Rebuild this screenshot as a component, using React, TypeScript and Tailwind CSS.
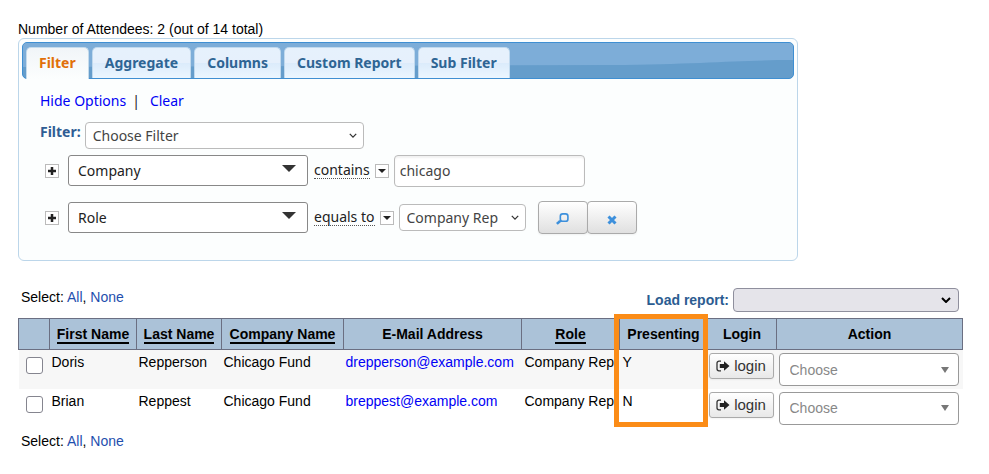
const tabs = ["Filter", "Aggregate", "Columns", "Custom Report", "Sub Filter"];

const attendees = [
  {
    first: "Doris",
    last: "Repperson",
    company: "Chicago Fund",
    email: "drepperson@example.com",
    role: "Company Rep",
    presenting: "Y",
  },
  {
    first: "Brian",
    last: "Reppest",
    company: "Chicago Fund",
    email: "breppest@example.com",
    role: "Company Rep",
    presenting: "N",
  },
];

export default function App() {
  return (
    <main className="min-h-screen bg-white pt-5 pr-[26px] pb-5 pl-[18px] font-['Liberation_Sans',Arial,sans-serif] text-sm text-black">
      <p className="leading-[18px]">Number of Attendees: 2 (out of 14 total)</p>

      <FilterPanel />

      <div className="mt-[27px] flex items-start justify-between pr-1 pl-[3px]">
        <SelectLinks />
        <div className="flex items-center gap-1">
          <label htmlFor="load-report" className="font-bold text-[#2b5c91]">
            Load report:
          </label>
          <div className="relative">
            <select
              id="load-report"
              className="block h-6 w-[226px] appearance-none rounded border border-[#8f8f9d] bg-[#e5e4ea]"
            />
            <Chevron className="right-2 h-[6px] w-[10px] stroke-2 text-black" />
          </div>
        </div>
      </div>

      <AttendeeTable />

      <div className="mt-1 pl-[3px]">
        <SelectLinks />
      </div>
    </main>
  );
}

function FilterPanel() {
  return (
    <section className="w-full max-w-[780px] rounded-md border border-[#bcd6ea] bg-[#fcfefe] p-[3px] font-['Noto_Sans','Lucida_Grande',sans-serif] text-sm text-[#222]">
      <div className="relative h-[37px] rounded-[5px] border border-[#3f8fd2] bg-[#659dcb]">
        <svg
          className="absolute inset-0 h-full w-full"
          viewBox="0 0 772 35"
          preserveAspectRatio="none"
          aria-hidden="true"
        >
          <path d="M0 4a4 4 0 0 1 4-4h764a4 4 0 0 1 4 4v13C720 17 680 21 590 22L0 24Z" fill="#7dadd8" />
        </svg>
        <div role="tablist" className="relative flex gap-[3px] pt-1 pl-[3px]">
          {tabs.map((tab, index) => (
            <button
              key={tab}
              type="button"
              role="tab"
              aria-selected={index === 0}
              className={
                index === 0
                  ? "-mb-px h-8 rounded-t-[5px] border border-b-0 border-[#c5dbec] bg-linear-to-b from-[#f1f5f8] to-[#fcfefe] px-3 pb-px font-bold text-[#e17009]"
                  : "h-[31px] rounded-t-[5px] border border-b-0 border-[#c0d9ee] bg-[linear-gradient(#e6f1fc_0%,#e6f0fc_50%,#dbebfb_50%,#ebf6ff_100%)] px-3 font-bold text-[#2e6594]"
              }
            >
              {tab}
            </button>
          ))}
        </div>
      </div>

      <div className="pr-4 pb-[23px] pl-[18px]">
        <div className="flex h-[43px] items-center gap-[6px]">
          <a href="#options" className="text-[#0000f5]">
            Hide Options
          </a>
          <span>|</span>
          <a href="#clear" className="ml-1 text-[#0000f5]">
            Clear
          </a>
        </div>

        <div className="flex gap-1">
          <label htmlFor="filter" className="leading-5 font-bold text-[#2f5d94]">
            Filter:
          </label>
          <div className="relative">
            <select
              id="filter"
              className="block h-[27px] w-[279px] appearance-none rounded border border-[#bbb] bg-white pl-[7px] text-[#444]"
            >
              <option>Choose Filter</option>
            </select>
            <Chevron className="right-[7px] h-[5px] w-2 stroke-[1.6] text-[#333]" />
          </div>
        </div>

        <div className="mt-[5px] flex h-[33px] items-center pl-[5px]">
          <AddButton />
          <FieldSelect value="Company" />
          <Operator text="contains" />
          <input
            type="text"
            aria-label="Company value"
            defaultValue="chicago"
            className="ml-[5px] h-8 w-[191px] rounded border border-[#bbb] bg-white px-[5px] text-[#444] shadow-[inset_0_2px_2px_#f2f2f2]"
          />
        </div>

        <div className="mt-[14px] flex h-[33px] items-center pl-[5px]">
          <AddButton />
          <FieldSelect value="Role" />
          <Operator text="equals to" />
          <div className="relative ml-[5px]">
            <select
              aria-label="Role value"
              className="block h-[27px] w-[127px] appearance-none rounded border border-[#bbb] bg-white pl-[7px] text-[#444]"
            >
              <option>Company Rep</option>
            </select>
            <Chevron className="right-[7px] h-[5px] w-2 stroke-[1.6] text-[#333]" />
          </div>
          <div className="ml-3 flex">
            <button
              type="button"
              aria-label="Search"
              className="flex h-[33px] w-[50px] items-center justify-center rounded border border-[#aaa] bg-linear-to-b from-white to-[#e0e0e0] pt-[3px] shadow-xs"
            >
              <svg viewBox="0 0 12 11" className="h-3 w-[13px]" fill="none" stroke="#3d90dc" aria-hidden="true">
                <rect x="4" y="0.8" width="7" height="6.8" rx="2.2" strokeWidth="1.5" />
                <path d="M4.8 6.8 3.5 8" strokeWidth="1.5" />
                <path d="M3.8 7.4 0.8 10" strokeWidth="2.4" />
              </svg>
            </button>
            <button
              type="button"
              aria-label="Clear filters"
              className="-ml-px flex h-[33px] w-[50px] items-center justify-center rounded border border-[#aaa] bg-linear-to-b from-white to-[#e0e0e0] pt-1 shadow-xs"
            >
              <svg viewBox="0 0 10 10" className="h-[10px] w-[10px]" fill="none" stroke="#3d90dc" strokeWidth="3" aria-hidden="true">
                <path d="m1.5 1.5 7 7M8.5 1.5l-7 7" />
              </svg>
            </button>
          </div>
        </div>
      </div>
    </section>
  );
}

function AddButton() {
  return (
    <button
      type="button"
      aria-label="Add condition"
      className="flex h-[14px] w-[14px] items-center justify-center border border-[#bbb] bg-white"
    >
      <svg viewBox="0 0 8 8" className="h-2 w-2" fill="none" stroke="#222" strokeWidth="2.5" aria-hidden="true">
        <path d="M4 0v8M0 4h8" />
      </svg>
    </button>
  );
}

function FieldSelect({ value }: { value: string }) {
  return (
    <div className="relative ml-[9px]">
      <select
        aria-label="Field"
        className="block h-[31px] w-[240px] appearance-none rounded-[3px] border border-[#888] bg-white pl-[9px] text-[#222]"
      >
        <option>{value}</option>
      </select>
      <svg
        viewBox="0 0 14 7"
        className="pointer-events-none absolute top-[10px] right-[12px] h-[7px] w-[14px]"
        fill="#333"
        aria-hidden="true"
      >
        <path d="M0 0h14L7 7Z" />
      </svg>
    </div>
  );
}

function Operator({ text }: { text: string }) {
  return (
    <>
      <span className="ml-[6px] border-b border-dotted border-[#555] leading-4">{text}</span>
      <button
        type="button"
        aria-label="Change operator"
        className="ml-[5px] flex h-[14px] w-[14px] items-center justify-center border border-[#bbb] bg-white"
      >
        <svg viewBox="0 0 8 4" className="h-1 w-2" fill="#222" aria-hidden="true">
          <path d="M0 0h8L4 4Z" />
        </svg>
      </button>
    </>
  );
}

function Chevron({ className }: { className: string }) {
  return (
    <svg
      viewBox="0 0 10 6"
      className={`pointer-events-none absolute inset-y-0 my-auto ${className}`}
      fill="none"
      stroke="currentColor"
      aria-hidden="true"
    >
      <path d="m1 1 4 4 4-4" />
    </svg>
  );
}

function SignOutIcon() {
  return (
    <svg viewBox="0 0 14 12" className="h-3 w-[14px]" aria-hidden="true">
      <path d="M5 1.2H3a2 2 0 0 0-2 2v5.6a2 2 0 0 0 2 2h2" fill="none" stroke="#333" strokeWidth="1.3" />
      <path d="M3.8 4H8V1.3L13.5 6 8 10.7V8H3.8Z" fill="#222" />
    </svg>
  );
}

function SelectLinks() {
  return (
    <p className="leading-[18px]">
      Select:{" "}
      <a href="#all" className="text-[#1f4fae]">
        All
      </a>
      ,{" "}
      <a href="#none" className="text-[#1f4fae]">
        None
      </a>
    </p>
  );
}

function AttendeeTable() {
  return (
    <table className="mt-[6px] w-full table-fixed border-collapse">
      <colgroup>
        <col className="w-[31px]" />
        <col className="w-[87px]" />
        <col className="w-[85px]" />
        <col className="w-[122px]" />
        <col className="w-[178px]" />
        <col className="w-[98px]" />
        <col className="w-[88px]" />
        <col className="w-[69px]" />
        <col />
      </colgroup>
      <thead>
        <tr className="h-[31px] bg-[#abc2d8]">
          <HeaderCell />
          <HeaderCell label="First Name" sortable />
          <HeaderCell label="Last Name" sortable />
          <HeaderCell label="Company Name" sortable />
          <HeaderCell label="E-Mail Address" />
          <HeaderCell label="Role" sortable />
          <HeaderCell label="Presenting" highlighted />
          <HeaderCell label="Login" />
          <HeaderCell label="Action" />
        </tr>
      </thead>
      <tbody>
        {attendees.map((person) => (
          <tr key={person.email} className="h-[39px] align-top whitespace-nowrap odd:bg-[#f7f7f7]">
            <td className="pt-[7px] pl-[7px]">
              <input
                type="checkbox"
                aria-label={`Select ${person.first} ${person.last}`}
                className="block h-[17px] w-[17px] appearance-none rounded-[3px] border border-[#85858f] bg-white"
              />
            </td>
            <td className="pt-[2px] pl-[2px]">{person.first}</td>
            <td className="pt-[2px] pl-[2px]">{person.last}</td>
            <td className="pt-[2px] pl-[2px]">{person.company}</td>
            <td className="pt-[2px] pl-[2px]">
              <a href={`mailto:${person.email}`} className="text-[#0000f5]">
                {person.email}
              </a>
            </td>
            <td className="pt-[2px] pl-[3px]">{person.role}</td>
            <td className="pt-[2px] pl-[3px]">{person.presenting}</td>
            <td className="pt-[3px] pl-px">
              <button
                type="button"
                className="flex h-[26px] w-[65px] items-center justify-center gap-1 rounded-[3px] border border-[#aaa] bg-linear-to-b from-white to-[#e8e8e8] text-[15px] text-[#333] shadow-xs"
              >
                <SignOutIcon />
                login
              </button>
            </td>
            <td className="pt-[3px] pr-1 pl-[2px]">
              <div className="relative">
                <select
                  aria-label={`Action for ${person.first} ${person.last}`}
                  className="block h-[33px] w-full appearance-none rounded border border-[#999] bg-white pl-[10px] text-[#888]"
                >
                  <option>Choose</option>
                </select>
                <svg
                  viewBox="0 0 8 6"
                  className="pointer-events-none absolute inset-y-0 right-[10px] my-auto h-[6px] w-2"
                  fill="#777"
                  aria-hidden="true"
                >
                  <path d="M0 0h8L4 6Z" />
                </svg>
              </div>
            </td>
          </tr>
        ))}
      </tbody>
    </table>
  );
}

function HeaderCell({
  label,
  sortable,
  highlighted,
}: {
  label?: string;
  sortable?: boolean;
  highlighted?: boolean;
}) {
  return (
    <th className="relative border border-[#6b6f82] font-bold whitespace-nowrap">
      {sortable ? (
        <a href="#sort" className="border-b-2 border-black">
          {label}
        </a>
      ) : (
        label
      )}
      {highlighted && (
        <span className="pointer-events-none absolute -top-[5px] -right-px -left-[6px] z-10 h-[113px] border-5 border-[#fb8c17]" />
      )}
    </th>
  );
}
